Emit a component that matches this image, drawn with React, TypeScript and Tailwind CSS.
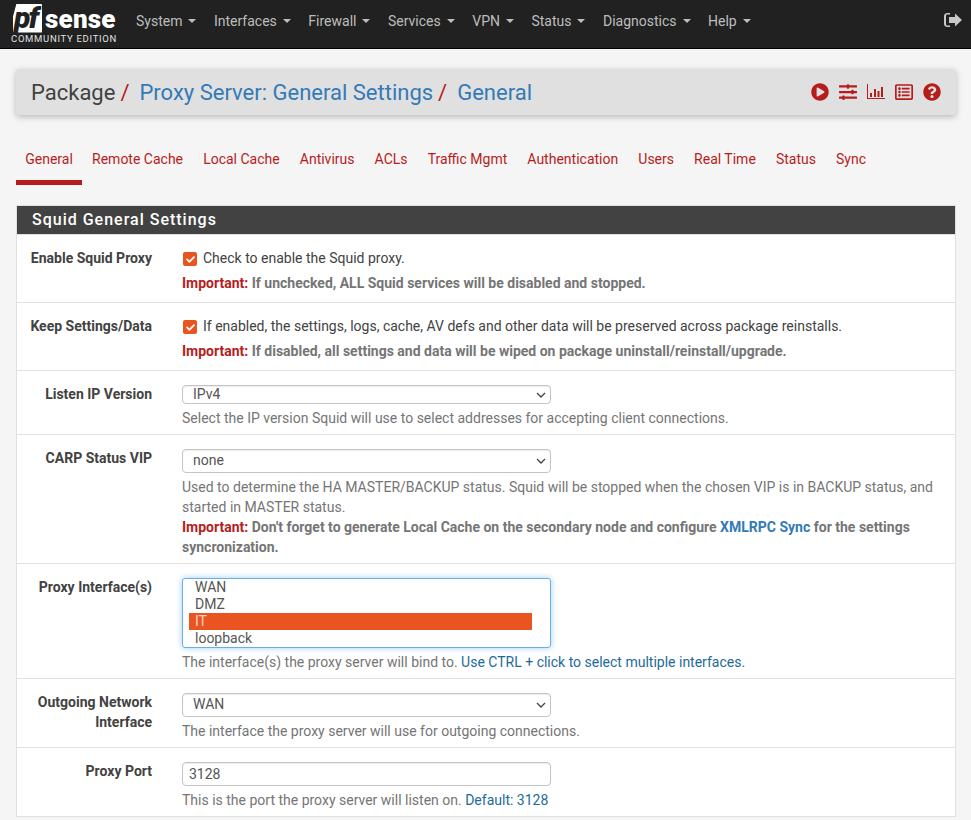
import { FaPlayCircle, FaSlidersH, FaRegListAlt, FaQuestionCircle, FaCheck } from 'react-icons/fa';

const navItems = ['System', 'Interfaces', 'Firewall', 'Services', 'VPN', 'Status', 'Diagnostics', 'Help'];
const tabs = ['General', 'Remote Cache', 'Local Cache', 'Antivirus', 'ACLs', 'Traffic Mgmt', 'Authentication', 'Users', 'Real Time', 'Status', 'Sync'];

function Logo() {
  return (
    <div className="flex flex-col self-start w-[106px] ml-[11px] mt-[3px]">
      <div className="flex items-center h-[30px]">
        <div className="relative w-[29px] h-[29px] ml-[2px]">
          <div className="absolute inset-0 bg-white rounded-[1px] [clip-path:polygon(12%_0,100%_0,100%_100%,0_100%,0_45%)]" />
          <span className="absolute left-[1px] top-[-3px] text-[30px] leading-[34px] font-black italic text-[#212121] tracking-[-2px]">pf</span>
        </div>
        <span className="text-[26px] leading-[30px] mt-[2px] font-black text-white ml-[3px] tracking-[0.2px]">sense</span>
      </div>
      <span className="text-[9.5px] leading-[11px] text-[#e0e0e0] tracking-[0.7px] whitespace-nowrap">COMMUNITY EDITION</span>
    </div>
  );
}

function BarChartIcon() {
  return (
    <svg viewBox="0 0 18 16" className="w-[18px] h-[16px]" fill="#b71c1c">
      <path d="M0 0h1v14h17v1H0z" />
      <rect x="3" y="9" width="2" height="4" />
      <rect x="7" y="5" width="2" height="8" />
      <rect x="10.5" y="7" width="2" height="6" />
      <rect x="14" y="3" width="2" height="10" />
    </svg>
  );
}

function SignOutIcon() {
  return (
    <svg viewBox="0 0 18 14" className="w-[18px] h-[14px]" fill="#c8c8c8">
      <path d="M6 1.500H3.500C2.700 1.500 2 2.200 2 3v8c0 .8.700 1.500 1.500 1.500H6V14H3.500C1.600 14 0 12.700 0 11V3C0 1.300 1.600 0 3.500 0H6z" />
      <path d="M11 .5l7 6.500-7 6.500V10H5V4h6z" />
    </svg>
  );
}

function Row({ label, children }: { label: React.ReactNode; children: React.ReactNode }) {
  return (
    <div className="flex border-b border-[#e0e0e0] bg-white">
      <div className="w-[135px] shrink-0 pt-[13px] text-right font-bold text-[#424242] leading-[20px]">{label}</div>
      <div className="flex-1 pl-[30px] pr-[15px] pt-[14px] pb-[6px]">{children}</div>
    </div>
  );
}

function Check({ text }: { text: string }) {
  return (
    <div className="flex items-start h-[20px] -mt-[1px] leading-[20px] text-[#424242]">
      <span className="mt-[4px] ml-[1px] mr-[6px] w-[14px] h-[14px] rounded-[2px] bg-[#e95420] flex items-center justify-center">
        <FaCheck className="text-white text-[9px]" />
      </span>
      {text}
    </div>
  );
}

function Important({ children }: { children: React.ReactNode }) {
  return (
    <p className="mt-[5px] mb-[3px] font-bold text-[#757575] leading-[20px]">
      <span className="text-[#b71c1c]">Important:</span> {children}
    </p>
  );
}

function Help({ children }: { children: React.ReactNode }) {
  return <p className="mt-[4px] text-[#757575] leading-[20px]">{children}</p>;
}

function Select({ value, short }: { value: string; short?: boolean }) {
  return (
    <div className="relative w-[369px]">
      <select
        defaultValue={value}
        className={`block w-full appearance-none pl-[10px] bg-white border border-[#c4c4c4] rounded-[4px] text-[14px] text-[#555555] outline-none shadow-[inset_0_1px_1px_rgba(0,0,0,0.075)] ${short ? 'h-[19px] leading-[17px]' : 'h-[24px] pb-[2px] leading-[20px]'}`}
      >
        <option>{value}</option>
      </select>
      <svg viewBox="0 0 10 6" className="absolute right-[5px] top-1/2 -translate-y-1/2 w-[10px] h-[6px]" fill="none" stroke="#444444" strokeWidth="1.3">
        <path d="M1 1l4 4 4-4" />
      </svg>
    </div>
  );
}

export default function App() {
  return (
    <div className="w-[971px] h-[820px] overflow-hidden bg-[#f5f5f5] text-[14px] font-['Roboto',sans-serif]">
      <nav className="flex items-center h-[49px] bg-[#212121] border-b border-black">
        <Logo />
        <ul className="flex ml-[19px] mb-[7px] text-[#bdbdbd]">
          {navItems.map((item) => (
            <li key={item} className="flex items-center mr-[17.5px] leading-[20px]">
              {item}
              <span className="ml-[6px] mt-[1px] border-x-[4px] border-x-transparent border-t-[4px] border-t-[#bdbdbd]" />
            </li>
          ))}
        </ul>
        <div className="ml-auto mr-[9px] mb-[8px]">
          <SignOutIcon />
        </div>
      </nav>

      <div className="flex items-center justify-between w-[940px] h-[46px] ml-[16px] mt-[20px] bg-[#e0e0e0] rounded-[3px] shadow-[0_2px_6px_rgba(0,0,0,0.25)] pl-[15px] pr-[15px]">
        <h1 className="text-[22px] leading-[26px] pt-[2px] text-[#424242] whitespace-nowrap">
          Package<span className="text-[#b71c1c] ml-[5px]">/</span>
          <span className="text-[#337ab7] ml-[10px]">Proxy Server: General Settings</span>
          <span className="text-[#b71c1c] ml-[5px]">/</span>
          <span className="text-[#337ab7] ml-[10px]">General</span>
        </h1>
        <div className="flex items-center gap-[10px] text-[#b71c1c]">
          <FaPlayCircle className="w-[18px] h-[18px]" />
          <FaSlidersH className="w-[18px] h-[18px]" />
          <BarChartIcon />
          <FaRegListAlt className="w-[18px] h-[18px]" />
          <FaQuestionCircle className="w-[18px] h-[18px]" />
        </div>
      </div>

      <ul className="flex mt-[18px] ml-[16px] h-[52px]">
        {tabs.map((tab, i) => (
          <li
            key={tab}
            className={`pt-[16px] leading-[20px] text-[#b71c1c] ${i === 0 ? 'w-[66px] text-center border-b-[5px] border-[#b71c1c]' : 'px-[10.06px]'}`}
          >
            {tab}
          </li>
        ))}
      </ul>

      <div className="w-[940px] ml-[16px] mt-[20px] border-x border-t border-[#e0e0e0]">
        <h2 className="h-[29px] bg-[#424242] border-b border-[#e0e0e0] pl-[15px] text-[16px] leading-[28px] font-medium tracking-[1px] text-white">Squid General Settings</h2>
        <Row label="Enable Squid Proxy">
          <Check text="Check to enable the Squid proxy." />
          <Important>If unchecked, ALL Squid services will be disabled and stopped.</Important>
        </Row>
        <Row label="Keep Settings/Data">
          <Check text="If enabled, the settings, logs, cache, AV defs and other data will be preserved across package reinstalls." />
          <Important>If disabled, all settings and data will be wiped on package uninstall/reinstall/upgrade.</Important>
        </Row>
        <Row label="Listen IP Version">
          <Select value="IPv4" short />
          <Help>Select the IP version Squid will use to select addresses for accepting client connections.</Help>
        </Row>
        <Row label="CARP Status VIP">
          <Select value="none" />
          <Help>Used to determine the HA MASTER/BACKUP status. Squid will be stopped when the chosen VIP is in BACKUP status, and started in MASTER status.</Help>
          <div className="font-bold text-[#757575] leading-[20px]">
            <span className="text-[#b71c1c]">Important:</span> Don't forget to generate Local Cache on the secondary node and configure <a className="text-[#337ab7]">XMLRPC Sync</a> for the settings syncronization.
          </div>
        </Row>
        <Row label="Proxy Interface(s)">
          <div className="w-[369px] h-[70px] border border-[#66afe9] rounded-[3px] shadow-[0_0_6px_rgba(102,175,233,0.6)] bg-white pl-[6px] pr-[18px] text-[#555555] leading-[17px]">
            <div className="pl-[6px]">WAN</div>
            <div className="pl-[6px]">DMZ</div>
            <div className="pl-[6px] bg-[#e95420] text-[#f5d5c8]">IT</div>
            <div className="pl-[6px]">loopback</div>
          </div>
          <Help>
            The interface(s) the proxy server will bind to. <span className="text-[#1e6a99]">Use CTRL + click to select multiple interfaces.</span>
          </Help>
        </Row>
        <Row label="Outgoing Network Interface">
          <Select value="WAN" />
          <Help>The interface the proxy server will use for outgoing connections.</Help>
        </Row>
        <Row label="Proxy Port">
          <input
            defaultValue="3128"
            className="block w-[369px] h-[24px] px-[6px] bg-white border border-[#c4c4c4] rounded-[4px] text-[#555555] shadow-[inset_0_1px_1px_rgba(0,0,0,0.075)] outline-none"
          />
          <Help>
            This is the port the proxy server will listen on. <span className="text-[#1e6a99]">Default: 3128</span>
          </Help>
        </Row>
      </div>
    </div>
  );
}
